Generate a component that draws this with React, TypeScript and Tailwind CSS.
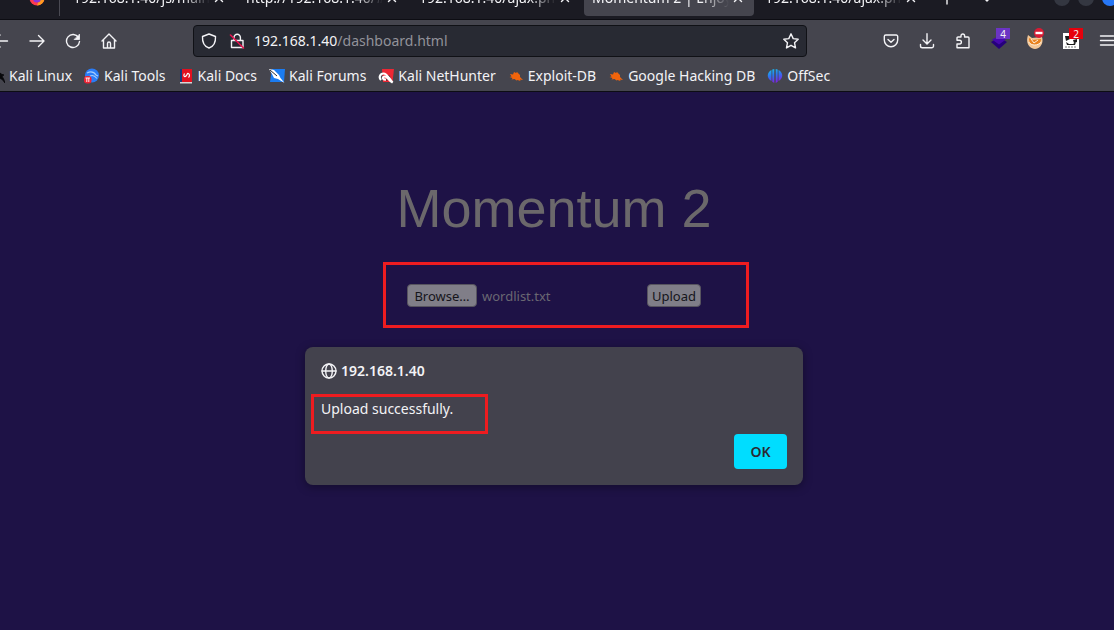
import type { ReactNode } from "react";

const stroke = {
  fill: "none",
  stroke: "currentColor",
  strokeWidth: 1.4,
  strokeLinecap: "round" as const,
  strokeLinejoin: "round" as const,
};

function Icon({ children }: { children: ReactNode }) {
  return (
    <svg viewBox="0 0 16 16" className="size-4 shrink-0" aria-hidden="true" {...stroke}>
      {children}
    </svg>
  );
}

const CloseIcon = () => (
  <svg viewBox="0 0 10 10" className="size-2.5 shrink-0" aria-hidden="true" {...stroke}>
    <path d="M1.500 1.500l7 7M8.500 1.500l-7 7" />
  </svg>
);

const tabs = [
  { title: "192.168.1.40/js/main.js", active: false },
  { title: "http://192.168.1.40/#home", active: false },
  { title: "192.168.1.40/ajax.php.bak", active: false },
  { title: "Momentum 2 | Enjoy it", active: true },
  { title: "192.168.1.40/ajax.php.bak", active: false },
];

const DragonIcon = () => (
  <svg viewBox="0 0 16 16" className="size-4 shrink-0" aria-hidden="true">
    <path d="M2 3c4-1 8 0 10 3l3 1-2 1c1 2 2 3 3 7-2-3-4-5-7-5-3-1-4-2-4-4 1 2 3 2 5 2C8 5 5 4 2 3z" fill="#08080b" stroke="#08080b" strokeWidth="0.800" />
  </svg>
);

const ToolsIcon = () => (
  <svg viewBox="0 0 16 16" className="size-4 shrink-0" aria-hidden="true">
    <circle cx="8" cy="7.500" r="7" fill="#2a7cf7" />
    <path d="M3 5c4-2 7-1 9 2l2 1M6 8c3-1.500 5 0 7 2.500" stroke="#a5cdfb" strokeWidth="1.100" fill="none" />
    <rect x="0" y="8" width="7.500" height="7.500" rx="3" fill="#ee2334" />
    <path d="M1.500 10h4.500M2.800 10v4M4.800 10v4" stroke="#fff" strokeWidth="0.900" fill="none" />
  </svg>
);

const DocsIcon = () => (
  <svg viewBox="0 0 16 16" className="size-4 shrink-0" aria-hidden="true">
    <path d="M2 1h2v13H2z" fill="#173a78" />
    <path d="M4 1h10v13H4z" fill="#e3101f" />
    <path d="M2 14h12v1.500H2z" fill="#d9d5d6" />
    <path d="M6.500 5.500C5 8 6.500 9.500 8 8s1-3 2.300-2.500S12 8 10.500 9.500" stroke="#fff" strokeWidth="1.200" fill="none" />
  </svg>
);

const ForumsIcon = () => (
  <svg viewBox="0 0 16 16" className="size-4 shrink-0" aria-hidden="true">
    <path d="M3 1h13l-1 13H1z" fill="#1b7cf2" />
    <path d="M0 1l5 1 5 5 1.500 3 4 5-6.500-4-4-1-2-4z" fill="#fff" />
    <path d="M1 2l7 6" stroke="#252a35" strokeWidth="1" />
  </svg>
);

const NetHunterIcon = () => (
  <svg viewBox="0 0 16 16" className="size-4 shrink-0" aria-hidden="true">
    <path d="M4 1h12l-1.500 13H5z" fill="#ed2734" />
    <path d="M10 7l2 1 1 5-3-1-2 1z" fill="#2b1c24" />
    <path d="M3 12c-2.500-2.500-1-6.500 2.500-6.500S10 9 14.500 14.500C11 13 9 8 6.500 8.500S4.500 12 8 11.500" fill="none" stroke="#fff" strokeWidth="2.200" />
  </svg>
);

const ExploitIcon = () => (
  <svg viewBox="0 0 16 16" className="size-4 shrink-0" aria-hidden="true">
    <path d="M2 6l3 .5L6 4l2 1 1-1 3 3v2l3 3-3-.5.5 1.500-3-1-1 .5-2-1.500-3 .5 1-1.500-3-1 2-.5z" fill="#f2640c" />
  </svg>
);

const OffSecIcon = () => (
  <svg viewBox="0 0 16 16" className="size-4 shrink-0" aria-hidden="true">
    <defs>
      <linearGradient id="offsec" x1="0" y1="0" x2="0.300" y2="1">
        <stop offset="0" stopColor="#19c5e8" />
        <stop offset="0.500" stopColor="#2b78f0" />
        <stop offset="1" stopColor="#7a25e6" />
      </linearGradient>
    </defs>
    <path d="M7.300 1v14l-2-1.300V1.600zM8.700 1v14l2-1.300V1.600zM4.500 2v11C-.5 10.500-.5 4.500 4.500 2zM11.500 2v11C16.500 10.500 16.500 4.500 11.500 2z" fill="url(#offsec)" />
  </svg>
);

const bookmarks = [
  { label: "Kali Linux", icon: <DragonIcon /> },
  { label: "Kali Tools", icon: <ToolsIcon /> },
  { label: "Kali Docs", icon: <DocsIcon /> },
  { label: "Kali Forums", icon: <ForumsIcon /> },
  { label: "Kali NetHunter", icon: <NetHunterIcon /> },
  { label: "Exploit-DB", icon: <ExploitIcon /> },
  { label: "Google Hacking DB", icon: <ExploitIcon /> },
  { label: "OffSec", icon: <OffSecIcon /> },
];

function TabStrip() {
  return (
    <div className="flex h-5 items-end overflow-hidden border-b border-[#0d0d13] bg-[#1b1b23] pb-[3px]">
      <div className="flex h-9 w-[60px] shrink-0 items-center justify-end border-r border-[#4a4a53] pr-[14px]">
        <svg viewBox="0 0 16 16" className="size-4" aria-hidden="true">
          <circle cx="8" cy="8" r="7.500" fill="#ff3b4e" />
          <path d="M8 15.500A7.500 7.500 0 0015.500 8L12 5z" fill="#ff9a1f" />
          <circle cx="8" cy="8.500" r="4" fill="#8a35dc" />
        </svg>
      </div>
      <div className="flex gap-[3px] pl-[5px]">
        {tabs.map((tab, i) => (
          <div
            key={i}
            className={
              tab.active
                ? "flex h-9 w-[170px] items-center gap-1 rounded bg-[#45454e] pr-[11px] pl-2"
                : "flex h-9 w-[170px] items-center gap-1 rounded pr-[11px] pl-2"
            }
          >
            <span className="flex-1 overflow-hidden mask-r-from-80% whitespace-nowrap">{tab.title}</span>
            <button type="button" aria-label="Close tab">
              <CloseIcon />
            </button>
          </div>
        ))}
      </div>
      <div className="flex h-9 flex-1 items-center">
        <button type="button" aria-label="New tab" className="ml-3">
          <Icon>
            <path d="M8 2v12M2 8h12" />
          </Icon>
        </button>
        <button type="button" aria-label="List all tabs" className="ml-6">
          <Icon>
            <path d="M3.500 6.500l4.500 4.500 4.500-4.500" />
          </Icon>
        </button>
        <div className="ml-auto flex gap-2">
          <button type="button" aria-label="Minimize" className="size-4 rounded-full bg-[#343741]" />
          <button type="button" aria-label="Maximize" className="size-4 rounded-full bg-[#343741]" />
          <button type="button" aria-label="Close window" className="-mr-1 size-4 rounded-full bg-[#2777f5]" />
        </div>
      </div>
    </div>
  );
}

function Toolbar() {
  return (
    <div className="flex h-[42px] items-center">
      <div className="-ml-[7px] flex gap-5">
        <button type="button" aria-label="Back">
          <Icon>
            <path d="M14.500 8H1M7 2L1 8l6 6" />
          </Icon>
        </button>
        <button type="button" aria-label="Forward">
          <Icon>
            <path d="M1 8h14M9.500 2.500L15 8l-5.500 5.500" />
          </Icon>
        </button>
        <button type="button" aria-label="Reload">
          <Icon>
            <path d="M13.500 4.500A6.500 6.500 0 1014.500 8.500" />
            <path d="M14.500 1.500v5h-5z" fill="currentColor" strokeWidth="0.800" />
          </Icon>
        </button>
        <button type="button" aria-label="Home">
          <Icon>
            <path d="M1 8l7-7 7 7M2.500 7v8h11V7M6.500 15v-4.500a1.500 1.500 0 013 0V15" />
          </Icon>
        </button>
      </div>
      <div className="ml-[76px] flex h-8 flex-1 items-center rounded border border-[#101116] bg-[#282a33] px-[7px]">
        <button type="button" aria-label="Tracking protection">
          <Icon>
            <path d="M8 1l6.500 2.500C14.800 9 12.500 13.500 8 15 3.500 13.500 1.200 9 1.500 3.500z" />
          </Icon>
        </button>
        <button type="button" aria-label="Connection is not secure" className="ml-3">
          <Icon>
            <path d="M5 7V4.500a3.200 3.200 0 016.400 0V7M2.500 7.500h11.500v7H2.500z" />
            <path d="M1.500 2l13 13" stroke="#e8134f" strokeWidth="1.600" />
          </Icon>
        </button>
        <div className="relative ml-[9px] flex-1 text-[14px]">
          <div aria-hidden="true" className="whitespace-nowrap">
            192.168.1.40<span className="text-[#92929a]">/dashboard.html</span>
          </div>
          <input
            aria-label="Address"
            defaultValue="192.168.1.40/dashboard.html"
            className="absolute inset-0 w-full bg-transparent text-transparent outline-none"
          />
        </div>
        <button type="button" aria-label="Bookmark this page">
          <Icon>
            <path d="M8 .8l2.200 4.800 5 .6-3.700 3.500 1 5.200L8 12.300l-4.500 2.600 1-5.200L.8 6.200l5-.6z" />
          </Icon>
        </button>
      </div>
      <div className="-mr-px ml-[76px] flex shrink-0 gap-5">
        <button type="button" aria-label="Pocket">
          <Icon>
            <path d="M2.800 2h10.400a1.500 1.500 0 011.500 1.500V7A6.700 6.700 0 011.300 7V3.500A1.500 1.500 0 012.800 2zM5 6.500l3 2.800 3-2.800" />
          </Icon>
        </button>
        <button type="button" aria-label="Downloads">
          <Icon>
            <path d="M8 .8v10M4 7l4 4 4-4M1.500 11.500V13A1.800 1.800 0 003.300 14.800h9.400A1.800 1.800 0 0014.500 13v-1.500" />
          </Icon>
        </button>
        <button type="button" aria-label="Extensions">
          <Icon>
            <path d="M2 6.500V5a1 1 0 011-1h3V2.800a1.800 1.800 0 013.600 0V4H13a1 1 0 011 1v9.800H2V11h2.500a1.900 1.900 0 000-3.800H2z" />
          </Icon>
        </button>
        <button type="button" aria-label="Wappalyzer" className="relative">
          <svg viewBox="0 0 16 16" className="size-4" aria-hidden="true">
            <path d="M0 9l8-5 8 5-8 7z" fill="#26007c" />
            <path d="M1 6.500L8 3l7 3.500-7 5z" fill="#4608ad" />
          </svg>
          <span className="absolute -top-[5px] left-[5px] flex h-[11px] w-[14px] items-center justify-center bg-[#6b34c4] text-[10px] leading-none">
            4
          </span>
        </button>
        <button type="button" aria-label="Cookie editor" className="relative">
          <svg viewBox="0 0 16 16" className="size-4" aria-hidden="true">
            <path d="M1 2l4 3 10-1c2 6-2 12-7 12S-2 11 1 2z" fill="#f3c696" />
            <path d="M2 5l4 2 8-1c0 4-3 6-6 6-4 0-6-2-6-7z" fill="#e9821f" />
            <path d="M1.500 9c3 4 9 4 13 0M4 6l3 4 4-3" fill="none" stroke="#fff0db" strokeWidth="1" />
          </svg>
          <svg viewBox="0 0 10 10" className="absolute -top-[5px] left-[7px] size-[10px]" aria-hidden="true">
            <circle cx="5" cy="5" r="5" fill="#d81b34" />
            <path d="M1.500 3.800h7v2.400h-7z" fill="#fff" />
          </svg>
        </button>
        <button type="button" aria-label="Script blocker" className="relative">
          <svg viewBox="0 0 16 16" className="size-4" aria-hidden="true">
            <path d="M0 0h16v16H0z" fill="#fff" />
            <path d="M2 3h4l1 3-4 2zM14 6l-4 1 1 3 3-1zM3 9l3 2h4l3-2-1 3H4z" fill="#1c1c1c" />
            <path d="M2 14h12" stroke="#777" strokeWidth="1.200" strokeDasharray="2 1" />
          </svg>
          <span className="absolute -top-[5px] left-[6px] flex h-[11px] w-[14px] items-center justify-center bg-[#e6000c] text-[10px] leading-none">
            2
          </span>
        </button>
        <button type="button" aria-label="Application menu">
          <Icon>
            <path d="M1.500 3h13M1.500 7.500h13M1.500 12h13" />
          </Icon>
        </button>
      </div>
    </div>
  );
}

export default function App() {
  return (
    <div className="flex min-h-screen flex-col overflow-hidden bg-[#1e1246] font-['Noto_Sans',sans-serif] text-sm text-[#f3f3f6]">
      <header className="border-b border-[#0d0d13] bg-[#45454e]">
        <TabStrip />
        <Toolbar />
        <nav className="-ml-[11px] flex h-[29px] items-center gap-3 pb-0.5 whitespace-nowrap">
          {bookmarks.map((b) => (
            <a key={b.label} href="#" className="flex items-center gap-1">
              {b.icon}
              {b.label}
            </a>
          ))}
        </nav>
      </header>

      <main className="flex flex-1 flex-col items-center pt-[86px] pr-[6px]">
        <h1 className="font-['Liberation_Sans',sans-serif] text-[54px] leading-[60px] text-[#6b686b]">Momentum 2</h1>

        <form
          className="relative mt-[46px] flex h-[23px] w-[294px] items-center text-[13px] leading-5 text-[#15151b]"
          onSubmit={(e) => e.preventDefault()}
        >
          <input id="file" type="file" className="sr-only" />
          <label
            htmlFor="file"
            className="flex h-[23px] w-[70px] items-center justify-center rounded border border-[#57545f] bg-[#807e88]"
          >
            Browse…
          </label>
          <span className="ml-[5px] text-[#6a6772]">wordlist.txt</span>
          <button type="submit" className="ml-auto h-[23px] w-[54px] rounded border border-[#57545f] bg-[#807e88]">
            Upload
          </button>
          <div className="pointer-events-none absolute -top-[22px] -right-12 -bottom-[21px] -left-6 border-3 border-[#ee1c20]" />
        </form>

        <section
          role="alertdialog"
          aria-labelledby="origin"
          aria-describedby="message"
          className="mt-10 flex w-[498px] flex-col rounded-lg bg-[#43424d] p-4 shadow-[0_2px_10px_rgba(0,0,0,0.35)]"
        >
          <h2 id="origin" className="flex h-4 items-center gap-1 font-semibold">
            <Icon>
              <circle cx="8" cy="8" r="7" />
              <ellipse cx="8" cy="8" rx="3.300" ry="7" />
              <path d="M1 8h14" />
            </Icon>
            192.168.1.40
          </h2>
          <div className="relative mt-5 flex h-5 w-[162px] items-center">
            <p id="message">Upload successfully.</p>
            <div className="pointer-events-none absolute -top-[5px] -right-[5px] -bottom-[15px] -left-[10px] border-3 border-[#ee1c20]" />
          </div>
          <button
            type="button"
            className="mt-[15px] h-[35px] w-[53px] self-end rounded bg-[#00ddff] font-semibold text-[#2b2a33]"
          >
            OK
          </button>
        </section>
      </main>
    </div>
  );
}
